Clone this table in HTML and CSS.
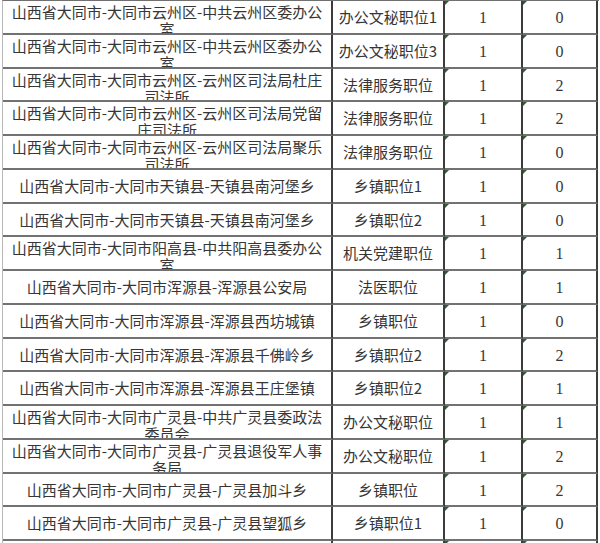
FILE: index.html
```html
<!DOCTYPE html>
<html lang="zh-CN">
<head>
<meta charset="utf-8">
<title>职位表</title>
<link rel="stylesheet" href="styles.css">
</head>
<body>
<div class="sheet">
  <div class="c name wrap">山西省大同市-大同市云州区-中共云州区委办公<br>室</div><div class="c">办公文秘职位1</div><div class="c num">1</div><div class="c num">0</div>
  <div class="c name wrap">山西省大同市-大同市云州区-中共云州区委办公<br>室</div><div class="c">办公文秘职位3</div><div class="c num">1</div><div class="c num">0</div>
  <div class="c name wrap">山西省大同市-大同市云州区-云州区司法局杜庄<br>司法所</div><div class="c">法律服务职位</div><div class="c num">1</div><div class="c num">2</div>
  <div class="c name wrap">山西省大同市-大同市云州区-云州区司法局党留<br>庄司法所</div><div class="c">法律服务职位</div><div class="c num">1</div><div class="c num">2</div>
  <div class="c name wrap">山西省大同市-大同市云州区-云州区司法局聚乐<br>司法所</div><div class="c">法律服务职位</div><div class="c num">1</div><div class="c num">0</div>
  <div class="c name">山西省大同市-大同市天镇县-天镇县南河堡乡</div><div class="c">乡镇职位1</div><div class="c num">1</div><div class="c num">0</div>
  <div class="c name">山西省大同市-大同市天镇县-天镇县南河堡乡</div><div class="c">乡镇职位2</div><div class="c num">1</div><div class="c num">0</div>
  <div class="c name wrap">山西省大同市-大同市阳高县-中共阳高县委办公<br>室</div><div class="c">机关党建职位</div><div class="c num">1</div><div class="c num">1</div>
  <div class="c name">山西省大同市-大同市浑源县-浑源县公安局</div><div class="c">法医职位</div><div class="c num">1</div><div class="c num">1</div>
  <div class="c name">山西省大同市-大同市浑源县-浑源县西坊城镇</div><div class="c">乡镇职位</div><div class="c num">1</div><div class="c num">0</div>
  <div class="c name">山西省大同市-大同市浑源县-浑源县千佛岭乡</div><div class="c">乡镇职位2</div><div class="c num">1</div><div class="c num">2</div>
  <div class="c name">山西省大同市-大同市浑源县-浑源县王庄堡镇</div><div class="c">乡镇职位2</div><div class="c num">1</div><div class="c num">1</div>
  <div class="c name wrap">山西省大同市-大同市广灵县-中共广灵县委政法<br>委员会</div><div class="c">办公文秘职位</div><div class="c num">1</div><div class="c num">1</div>
  <div class="c name wrap">山西省大同市-大同市广灵县-广灵县退役军人事<br>务局</div><div class="c">办公文秘职位</div><div class="c num">1</div><div class="c num">2</div>
  <div class="c name">山西省大同市-大同市广灵县-广灵县加斗乡</div><div class="c">乡镇职位</div><div class="c num">1</div><div class="c num">2</div>
  <div class="c name">山西省大同市-大同市广灵县-广灵县望狐乡</div><div class="c">乡镇职位1</div><div class="c num">1</div><div class="c num">0</div>
  <div class="c name"></div><div class="c"></div><div class="c num"></div><div class="c num"></div>
</div>
</body>
</html>
```

FILE: styles.css
```css
html, body {
  margin: 0;
  padding: 0;
  background: #ffffff;
  overflow: hidden;
  height: 543px;
}

.sheet {
  margin-left: 2px;
  width: 596px;
  border-left: 1px solid #b8b8b8;
  border-top: 1px solid #707070;
  display: grid;
  grid-template-columns: 330px 112px 78px 75px;
  grid-auto-rows: 33.75px;
  font-family: "Noto Sans CJK SC", "Liberation Sans", sans-serif;
  font-size: 15px;
  color: #363636;
}

.c {
  position: relative;
  box-sizing: border-box;
  border-bottom: 2px solid #727272;
  border-right: 2px solid #3c3c3c;
  padding-top: 6px;
  text-align: center;
  white-space: nowrap;
  overflow: hidden;
  line-height: 20px;
}

.c.wrap {
  padding-top: 2px;
  line-height: 17px;
}

.c.num {
  font-family: "Liberation Serif", serif;
  font-size: 16px;
  padding-top: 7px;
}

.c.num::before {
  content: "";
  position: absolute;
  top: 0;
  left: 0;
  width: 0;
  height: 0;
  border-top: 4px solid #2f5f2f;
  border-right: 4px solid transparent;
}
```
